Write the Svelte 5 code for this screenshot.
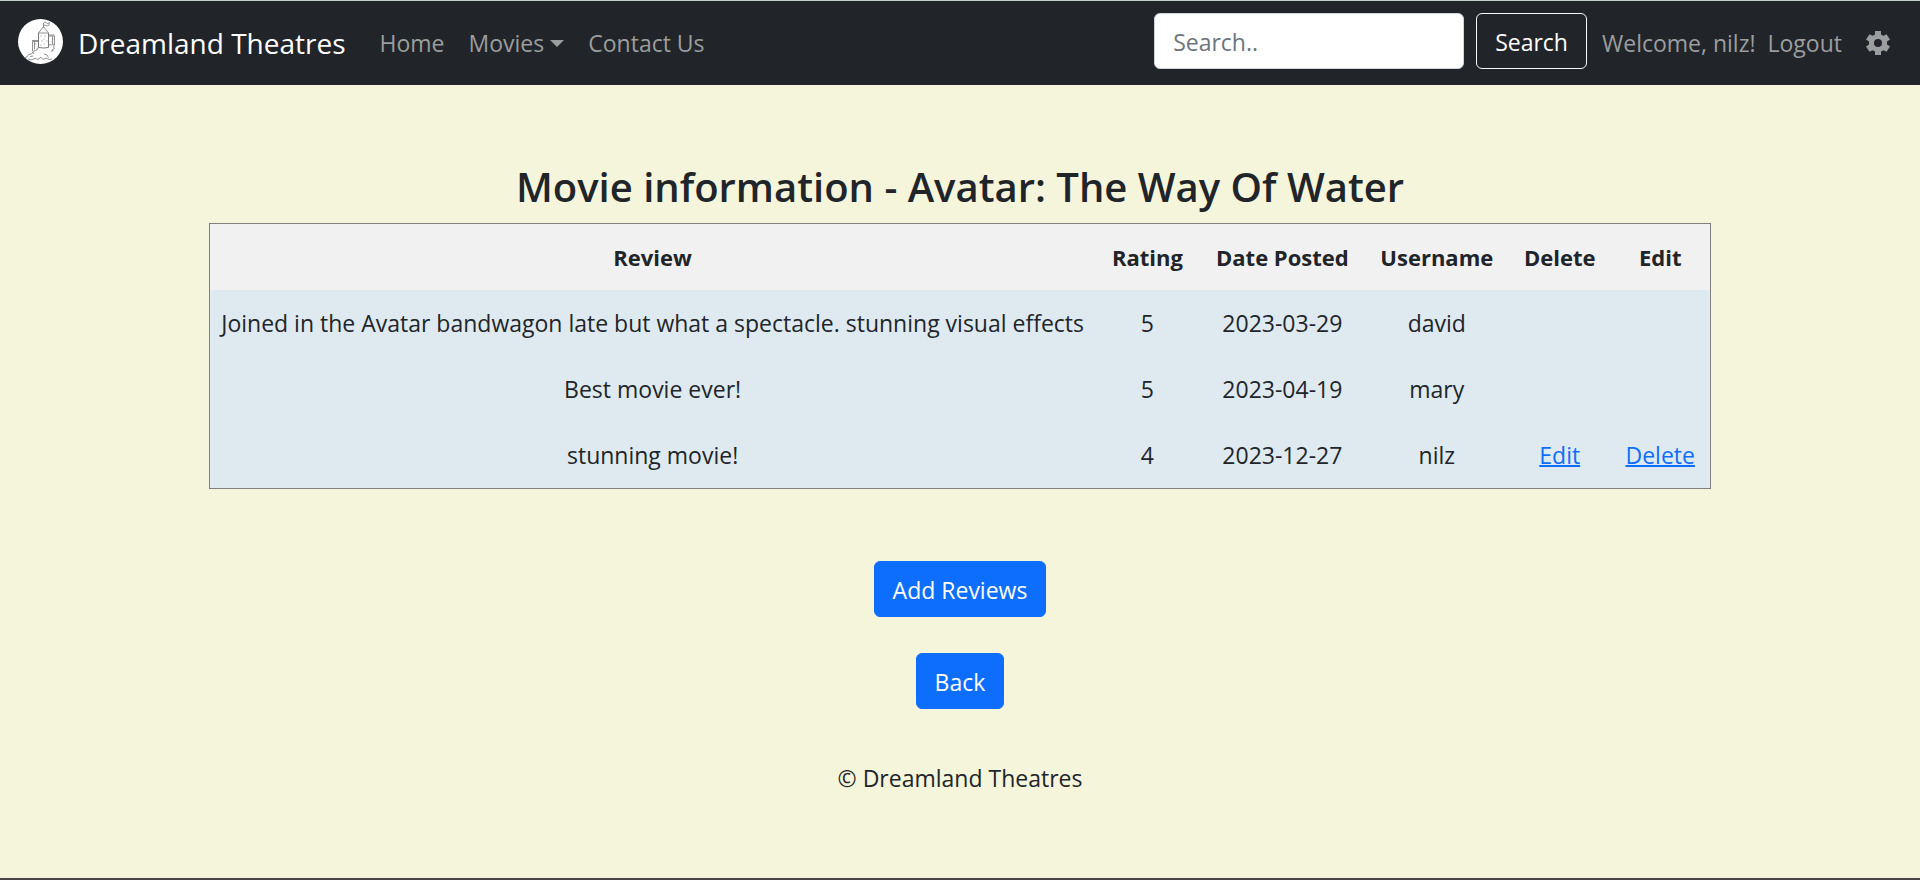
<script>
  const reviews = [
    { text: 'Joined in the Avatar bandwagon late but what a spectacle. stunning visual effects', rating: 5, date: '2023-03-29', user: 'david', own: false },
    { text: 'Best movie ever!', rating: 5, date: '2023-04-19', user: 'mary', own: false },
    { text: 'stunning movie!', rating: 4, date: '2023-12-27', user: 'nilz', own: true }
  ];
</script>

<div class="page">
  <header class="navbar">
    <a class="brand" href="#home">
      <svg class="logo" viewBox="0 0 45 45" aria-hidden="true">
        <circle cx="22.500" cy="22.500" r="22.500" fill="#fff" />
        <g fill="none" stroke="#777" stroke-width="0.8" stroke-linejoin="round">
          <path d="M25.500 8.500V4q2-1.500 3 0t3-.5l-.8 3q-1.500 1-2.700 0t-2.500.3M25.500 7.500l-5 6.500h10z" />
          <path d="M20.500 14v14.500q5 1 10 0V14" stroke-width="1" />
          <path d="M14.500 22.500v9.500M14.500 22.500h6M14 21.500h6.500M16.500 22.500v8M30.500 17h6v8q-3 1.500-6 .5M31 16h5.500M34.500 17v8" />
          <path d="M20.500 28.500l-2 3-3 .5-2 3-3 .5-1.500 2.500-2 .5M36.500 25l-1 3 1 1.500-2 1 .5 1.500h-2M15 33l1 2" />
          <path d="M10 40l3 1 4-1.500 3 .8 3-2 2 2.200 3-1.500 3 1.500 3-.5M12 37.500l3-.5M26 35l3 1 1.500 2.500" />
        </g>
        <path d="M22.500 17h1m3 0h1m-2 3h1m-3 2h1m4 0h1m-4 3h1m-4 1h1m-6-1h1m1 3h1m-2 2h1m15-10h1m-2 3h1" stroke="#888" stroke-width="0.9" />
      </svg>
      <span>Dreamland Theatres</span>
    </a>
    <nav class="links" aria-label="Main">
      <a href="#home">Home</a>
      <a href="#movies" class="dropdown">Movies<span class="caret"></span></a>
      <a href="#contact">Contact Us</a>
    </nav>
    <form class="search" role="search" onsubmit={(e) => e.preventDefault()}>
      <input type="search" placeholder="Search.." aria-label="Search movies" />
      <button type="submit">Search</button>
    </form>
    <div class="account">
      <span>Welcome, nilz!</span>
      <a href="#logout">Logout</a>
      <a class="gear" href="#settings" aria-label="Settings">
        <svg viewBox="0 0 24 24" aria-hidden="true">
          <path fill="currentColor" fill-rule="evenodd" d="M9 0h6v3.500l2.500 1.300 3-1.600L24 8.500l-3 2v3l3 2-3.500 5.300-3-1.600L15 20.500V24H9v-3.500l-2.500-1.300-3 1.600L0 15.500l3-2v-3l-3-2 3.500-5.300 3 1.600L9 3.500zM12 8a4 4 0 1 0 0 8 4 4 0 0 0 0-8z" />
        </svg>
      </a>
    </div>
  </header>

  <main>
    <h1>Movie information - Avatar: The Way Of Water</h1>
    <table>
      <colgroup>
        <col class="c-review" /><col class="c-rating" /><col class="c-date" />
        <col class="c-user" /><col class="c-delete" /><col />
      </colgroup>
      <thead>
        <tr>
          <th>Review</th><th>Rating</th><th>Date Posted</th>
          <th>Username</th><th>Delete</th><th>Edit</th>
        </tr>
      </thead>
      <tbody>
        {#each reviews as r}
          <tr>
            <td>{r.text}</td>
            <td>{r.rating}</td>
            <td>{r.date}</td>
            <td>{r.user}</td>
            <td>{#if r.own}<a href="#edit">Edit</a>{/if}</td>
            <td>{#if r.own}<a href="#delete">Delete</a>{/if}</td>
          </tr>
        {/each}
      </tbody>
    </table>
    <div class="actions">
      <button type="button">Add Reviews</button>
      <button type="button">Back</button>
    </div>
  </main>

  <footer>© Dreamland Theatres</footer>
</div>

<style>
  :global(body) {
    margin: 0;
    background: #f5f5dc;
  }
  .page {
    box-sizing: border-box;
    min-height: 100vh;
    display: flex;
    flex-direction: column;
    border-bottom: 2px solid #4a4346;
    color: #212529;
    font-family: 'Segoe UI', 'Open Sans', 'Noto Sans', sans-serif;
    font-size: 23px;
    line-height: 36px;
  }
  .navbar {
    display: flex;
    align-items: center;
    padding: 12px 30px 16px 18px;
    background: #212529;
    border-top: 1px solid #c3cfcd;
    white-space: nowrap;
  }
  .navbar a {
    color: inherit;
    text-decoration: none;
  }
  .navbar .brand {
    display: flex;
    align-items: center;
    gap: 15px;
    color: #fff;
    font-size: 28px;
  }
  .brand span {
    padding-top: 4px;
  }
  .logo {
    width: 45px;
    height: 45px;
  }
  .links {
    display: flex;
    gap: 24px;
    margin: 4px 0 0 34px;
    color: #9b9d9e;
  }
  .dropdown {
    display: flex;
    align-items: center;
    gap: 6px;
  }
  .caret {
    border: 7px solid transparent;
    border-top-color: currentColor;
    border-bottom: 0;
  }
  .search {
    display: flex;
    gap: 12px;
    margin-left: auto;
  }
  input,
  button {
    box-sizing: border-box;
    height: 56px;
    border: 1px solid #ced4da;
    border-radius: 6px;
    padding: 2px 18px 0;
    font: inherit;
  }
  input {
    width: 310px;
    background: #fff;
    color: #212529;
    appearance: none;
  }
  input::placeholder {
    color: #6c757d;
    opacity: 1;
  }
  button {
    color: #fff;
    cursor: pointer;
  }
  .search button {
    background: transparent;
    border-color: #f8f9fa;
  }
  .account {
    display: flex;
    align-items: center;
    gap: 12px;
    margin: 4px 0 0 15px;
    color: #9b9d9e;
  }
  .gear {
    display: flex;
    margin-left: 12px;
  }
  .gear svg {
    width: 24px;
    height: 24px;
  }
  main {
    display: flex;
    flex-direction: column;
    align-items: center;
    padding-top: 77px;
  }
  h1 {
    margin: 0 0 11px;
    font-size: 40px;
    font-weight: 600;
    line-height: 50px;
  }
  table {
    box-sizing: border-box;
    width: 78.2%;
    border: 1px solid #808080;
    border-spacing: 0;
    table-layout: fixed;
    text-align: center;
    background: #dfeaf0;
  }
  thead {
    background: #f1f1f1;
  }
  th,
  td {
    height: 36px;
    padding: 15px 0;
    white-space: nowrap;
  }
  th {
    font-size: 22px;
    font-weight: 700;
  }
  td a {
    color: #0d6efd;
    text-decoration: underline;
    text-decoration-thickness: 2px;
  }
  .c-review { width: 59%; }
  .c-rating { width: 7%; }
  .c-date { width: 11%; }
  .c-user { width: 9.6%; }
  .c-delete { width: 6.8%; }
  .actions {
    display: flex;
    flex-direction: column;
    align-items: center;
    gap: 36px;
    margin-top: 72px;
  }
  .actions button {
    background: #0d6efd;
    border-color: #0d6efd;
  }
  footer {
    margin-top: 51px;
    text-align: center;
  }
</style>
